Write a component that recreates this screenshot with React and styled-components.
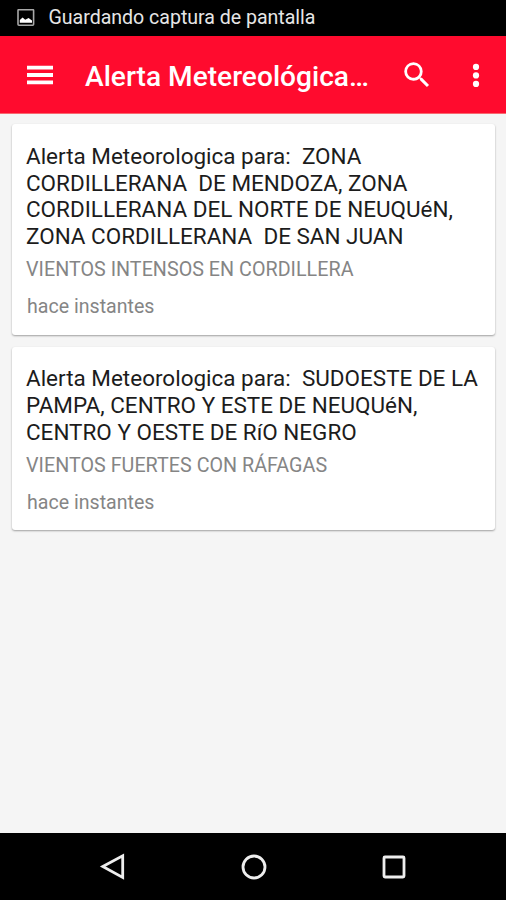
import React from 'react'
import styled, {createGlobalStyle} from "styled-components";

const alerts = [
    {
        id: 1,
        lines: [
            "Alerta Meteorologica para:  ZONA",
            "CORDILLERANA  DE MENDOZA, ZONA",
            "CORDILLERANA DEL NORTE DE NEUQUéN,",
            "ZONA CORDILLERANA  DE SAN JUAN",
        ],
        detail: "VIENTOS INTENSOS EN CORDILLERA",
        time: "hace instantes",
    },
    {
        id: 2,
        lines: [
            "Alerta Meteorologica para:  SUDOESTE DE LA",
            "PAMPA, CENTRO Y ESTE DE NEUQUéN,",
            "CENTRO Y OESTE DE RíO NEGRO",
        ],
        detail: "VIENTOS FUERTES CON RÁFAGAS",
        time: "hace instantes",
    },
];

const App = () => {
    return (
        <Screen>
            <GlobalStyle/>
            <StatusBar>
                <svg width="18" height="18" viewBox="0 0 18 18">
                    <rect x="1" y=".6" width="15.6" height="15.6" rx="1" fill="none" stroke="#a8a8a8" strokeWidth="1.6"/>
                    <path d="M2.8 13.8V11L5.6 8.6l2.6 2.2L11.6 9l3.4 2.6v2.2z" fill="#fff"/>
                </svg>
                <StatusText>Guardando captura de pantalla</StatusText>
            </StatusBar>
            <Toolbar>
                <IconButton $width={27} aria-label="Menú">
                    <svg width="27" height="20" viewBox="0 0 27 20">
                        <path d="M0 .8h26v3.8H0zM0 8.1h26v3.8H0zM0 15.4h26v3.8H0z"/>
                    </svg>
                </IconButton>
                <Title>Alerta Metereológica…</Title>
                <IconButton $width={34} aria-label="Buscar">
                    <svg width="34" height="34" viewBox="0 0 24 24">
                        <path
                            d="M15.5 14h-.79l-.28-.27A6.471 6.471 0 0 0 16 9.5 6.5 6.5 0 1 0 9.5 16c1.61 0 3.09-.59 4.23-1.57l.27.28v.79l5 4.99L20.49 19l-4.99-5zm-6 0C7.01 14 5 11.99 5 9.5S7.01 5 9.5 5 14 7.01 14 9.5 11.99 14 9.5 14z"/>
                    </svg>
                </IconButton>
                <IconButton $width={34} aria-label="Más opciones">
                    <svg width="34" height="34" viewBox="0 0 24 24">
                        <circle cx="12" cy="6.3" r="2.2"/>
                        <circle cx="12" cy="12.3" r="2.2"/>
                        <circle cx="12" cy="18.3" r="2.2"/>
                    </svg>
                </IconButton>
            </Toolbar>
            <List>
                {alerts.map((alert) => (
                    <Card key={alert.id}>
                        <CardTitle>{alert.lines.join("\n")}</CardTitle>
                        <Detail>{alert.detail}</Detail>
                        <Time>{alert.time}</Time>
                    </Card>
                ))}
            </List>
            <NavBar>
                <svg width="28" height="28" viewBox="0 0 28 28">
                    <path d="M3.8 13.6L23.7 2.8v21.6z"/>
                </svg>
                <svg width="28" height="28" viewBox="0 0 28 28">
                    <circle cx="14" cy="14" r="11"/>
                </svg>
                <svg width="28" height="28" viewBox="0 0 28 28">
                    <rect x="4" y="4" width="20" height="20" rx="1"/>
                </svg>
            </NavBar>
        </Screen>
    );
};

const GlobalStyle = createGlobalStyle`
    body {
        margin: 0;
        font-family: Roboto, sans-serif;
    }
`;

const Screen = styled.div`
    display: flex;
    flex-direction: column;
    width: 506px;
    height: 900px;
    overflow: hidden;
    background-color: #f5f5f5;
`;

const StatusBar = styled.div`
    display: flex;
    align-items: center;
    gap: 14px;
    height: 36px;
    box-sizing: border-box;
    padding-left: 16.5px;
    background-color: #000;
`;

const StatusText = styled.span`
    font-size: 19.6px;
    line-height: 36px;
    letter-spacing: -0.03px;
    color: #e6e6e6;
    white-space: nowrap;
`;

const Toolbar = styled.header`
    display: flex;
    align-items: center;
    height: 78px;
    box-sizing: border-box;
    padding: 0 13px 0 27px;
    background-color: #ff0b2e;
    border-bottom: 1px solid #f8676f;
`;

const IconButton = styled.button`
    display: flex;
    flex: none;
    width: ${({$width}) => $width}px;
    padding: 0;
    border: none;
    background: none;
    fill: #fff;

    & + & {
        margin-left: 25px;
    }
`;

const Title = styled.h1`
    flex: 1;
    margin: 0 0 0 31px;
    padding-top: 5px;
    font-size: 28.1px;
    font-weight: 500;
    line-height: 36px;
    letter-spacing: 0.02px;
    color: #fff;
    white-space: nowrap;
`;

const List = styled.main`
    display: flex;
    flex: 1;
    flex-direction: column;
    gap: 12px;
    padding: 10px 11px 0 12px;
`;

const Card = styled.article`
    padding: 18.8px 14px 14.8px;
    border-radius: 3px;
    background-color: #fff;
    box-shadow: 0 1px 2px rgba(0, 0, 0, 0.35);
`;

const CardTitle = styled.h2`
    margin: 0;
    font-size: 22.48px;
    font-weight: 400;
    line-height: 26.7px;
    color: #1c1c1c;
    white-space: pre;
`;

const Detail = styled.p`
    margin: 7.2px 0 0;
    font-size: 19.7px;
    line-height: 26px;
    letter-spacing: 0.03px;
    color: #858585;
`;

const Time = styled.p`
    margin: 11px 0 0 1px;
    font-size: 19.6px;
    line-height: 26px;
    color: #858585;
`;

const NavBar = styled.nav`
    display: flex;
    justify-content: center;
    gap: 112.5px;
    height: 67px;
    align-items: center;
    padding-left: 1px;
    background-color: #000;

    svg {
        fill: none;
        stroke: #eee;
        stroke-width: 2.8;
    }
`;

export default App
